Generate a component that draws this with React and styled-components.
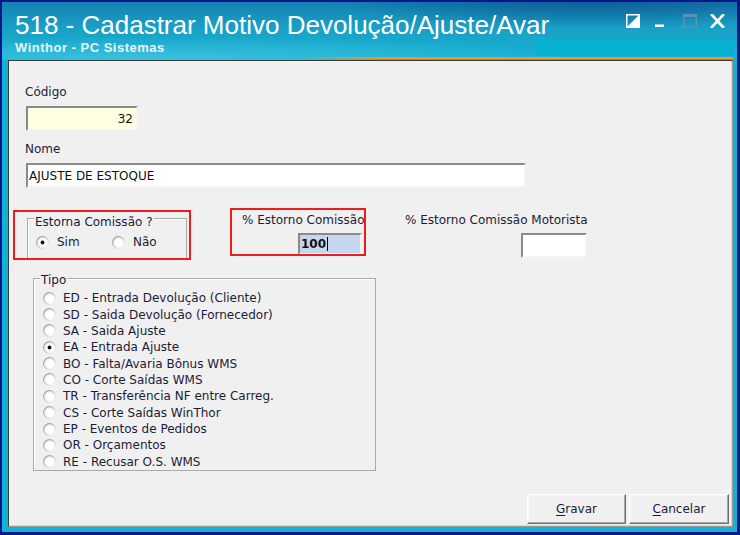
import React from "react";
import styled, { createGlobalStyle } from "styled-components";

const GlobalStyle = createGlobalStyle`
  html, body {
    margin: 0;
    padding: 0;
    background: #0b168a;
  }
  body {
    font-family: "DejaVu Sans", "Liberation Sans", sans-serif;
  }
`;

const tipos = [
  { code: "ED", text: "ED - Entrada Devolução (Cliente)" },
  { code: "SD", text: "SD - Saida Devolução (Fornecedor)" },
  { code: "SA", text: "SA - Saida Ajuste" },
  { code: "EA", text: "EA - Entrada Ajuste" },
  { code: "BO", text: "BO - Falta/Avaria Bônus WMS" },
  { code: "CO", text: "CO - Corte Saídas WMS" },
  { code: "TR", text: "TR - Transferência NF entre Carreg." },
  { code: "CS", text: "CS - Corte Saídas WinThor" },
  { code: "EP", text: "EP - Eventos de Pedidos" },
  { code: "OR", text: "OR - Orçamentos" },
  { code: "RE", text: "RE - Recusar O.S. WMS" },
];

// classic 3D radio bullet
const RadioMark = ({ checked }) => (
  <RadioSvg width="13" height="13" viewBox="0 0 13 13">
    <defs>
      <linearGradient id="rdOuter" x1="0" y1="0" x2="1" y2="1">
        <stop offset="0" stopColor="#8c8c8c" />
        <stop offset="0.55" stopColor="#c8c8c8" />
        <stop offset="1" stopColor="#ffffff" />
      </linearGradient>
      <linearGradient id="rdInner" x1="0" y1="0" x2="1" y2="1">
        <stop offset="0" stopColor="#c4c4c4" />
        <stop offset="0.6" stopColor="#eeeeee" />
        <stop offset="1" stopColor="#ffffff" />
      </linearGradient>
    </defs>
    <circle cx="6.5" cy="6.5" r="5.9" fill="#ffffff" stroke="url(#rdOuter)" strokeWidth="1.1" />
    <circle cx="6.5" cy="6.5" r="4.8" fill="none" stroke="url(#rdInner)" strokeWidth="1" />
    {checked && <circle cx="6.5" cy="6.5" r="1.9" fill="#111" />}
  </RadioSvg>
);

const App = () => {
  return (
    <>
      <GlobalStyle />
      <Window>
        <TitleBar>
          <TopRow>
            <Title>518 - Cadastrar Motivo Devolução/Ajuste/Avar</Title>
            <Controls>
              <ControlIcon width="14" height="14" viewBox="0 0 14 14">
                <rect x="0.75" y="0.75" width="12.5" height="12.5" fill="none" stroke="#fff" strokeWidth="1.5" />
                <polygon points="1,13 13,1 13,13" fill="#fff" />
              </ControlIcon>
              <ControlIcon $gap={15} width="9" height="14" viewBox="0 0 9 14">
                <rect x="0" y="10.5" width="9" height="2.5" fill="#fff" />
              </ControlIcon>
              <ControlIcon $gap={19} width="14" height="14" viewBox="0 0 14 14">
                <rect x="0.75" y="0.75" width="12.5" height="12.5" fill="none" stroke="#5f8fb0" strokeWidth="1.5" />
                <rect x="0" y="0" width="14" height="3" fill="#5f8fb0" />
              </ControlIcon>
              <ControlIcon $gap={13} width="15" height="14" viewBox="0 0 15 14">
                <path d="M2 1 L13 13 M13 1 L2 13" stroke="#fff" strokeWidth="2.6" strokeLinecap="square" />
              </ControlIcon>
            </Controls>
          </TopRow>
          <SubRow>
            <Subtitle>Winthor - PC Sistemas</Subtitle>
            <AccentBlock />
          </SubRow>
        </TitleBar>

        <Body>
          <Label $top={24} $left={16}>Código</Label>
          <Edit $top={7} $left={17} $width={112} $bg="#ffffe1" $align="right">
            32
          </Edit>
          <Label $top={11} $left={16}>Nome</Label>
          <Edit $top={7} $left={17} $width={500}>
            AJUSTE DE ESTOQUE
          </Edit>

          <FieldsRow>
            <Highlight $top={2} $width={178} $height={50}>
              <GroupBox $top={6} $left={12} $width={160} $height={42}>
                <Caption $top={-4}>Estorna Comissão ?</Caption>
                <RadioLine>
                  <RadioOption $width={76}>
                    <RadioMark checked />
                    Sim
                  </RadioOption>
                  <RadioOption>
                    <RadioMark />
                    Não
                  </RadioOption>
                </RadioLine>
              </GroupBox>
            </Highlight>

            <Highlight $left={39} $width={136} $height={48}>
              <Label $top={3} $left={10}>% Estorno Comissão</Label>
              <Edit $top={6} $left={66} $width={64} $height={22} $bg="#c7d6ef" $bold>
                100
                <Caret />
              </Edit>
            </Highlight>

            <FieldColumn $left={39}>
              <Label $top={5}>% Estorno Comissão Motorista</Label>
              <Edit $top={6} $left={116} $width={66} />
            </FieldColumn>
          </FieldsRow>

          <GroupBox $top={18} $left={24} $width={343} $height={193}>
            <Caption $top={-6}>Tipo</Caption>
            <TipoList>
              {tipos.map((t) => (
                <TipoItem key={t.code}>
                  <RadioMark checked={t.code === "EA"} />
                  {t.text}
                </TipoItem>
              ))}
            </TipoList>
          </GroupBox>

          <Footer>
            <Button $width={99}>
              <u>G</u>ravar
            </Button>
            <Button $width={100}>
              <u>C</u>ancelar
            </Button>
          </Footer>
        </Body>
      </Window>
    </>
  );
};

const Window = styled.div`
  width: 740px;
  height: 535px;
  box-sizing: border-box;
  border-style: solid;
  border-color: #0b168a;
  border-width: 2px 3px 3px 2px;
  background: #12b2d3;
  display: flex;
  flex-direction: column;
  overflow: hidden;
`;

const TitleBar = styled.div`
  position: relative;
  height: 58px;
  flex-shrink: 0;
  display: flex;
  flex-direction: column;
  padding-left: 13px;
  background:
    radial-gradient(ellipse 55% 95% at 80% -20%, rgba(5, 45, 115, 0.6), transparent 70%),
    radial-gradient(ellipse 90% 55% at 20% 95%, rgba(140, 225, 245, 0.3), transparent 65%),
    linear-gradient(180deg, #1482b3 0%, #19a0c6 45%, #15b3d4 100%);

  &::after {
    content: "";
    position: absolute;
    left: 300px;
    right: 4px;
    bottom: 1px;
    height: 2px;
    background: linear-gradient(90deg, rgba(232, 156, 44, 0), #e89c2c 18%, #e89c2c);
  }
`;

const TopRow = styled.div`
  display: flex;
  align-items: flex-start;
  padding-top: 8px;
`;

const Title = styled.div`
  font-family: "Liberation Sans", Arial, sans-serif;
  font-size: 26px;
  line-height: 30px;
  color: #ffffff;
  white-space: nowrap;
`;

const Controls = styled.div`
  margin-left: auto;
  margin-right: 12px;
  margin-top: 4px;
  display: flex;
  align-items: flex-start;
`;

const ControlIcon = styled.svg`
  display: block;
  margin-left: ${(p) => p.$gap || 0}px;
`;

const SubRow = styled.div`
  display: flex;
  align-items: flex-start;
`;

const Subtitle = styled.div`
  font-family: "Liberation Sans", Arial, sans-serif;
  font-weight: bold;
  font-size: 13px;
  line-height: 15px;
  letter-spacing: 0.5px;
  color: #e8f6fb;
  white-space: nowrap;
`;

const AccentBlock = styled.div`
  margin-left: auto;
  margin-right: 4px;
  width: 197px;
  height: 16px;
  background: #05b0d0;
`;

const Body = styled.div`
  flex: 1;
  margin: 0 4px 5px 6px;
  box-sizing: border-box;
  border: 1px solid;
  border-color: #3a3a3a #9a9a9a #9a9a9a #3a3a3a;
  box-shadow: inset -1px -1px 0 #d8d8d8;
  background: #f0f0f0;
  display: flex;
  flex-direction: column;
  align-items: flex-start;
  font-size: 12px;
  color: #1c1c38;
`;

const Label = styled.div`
  margin-top: ${(p) => p.$top || 0}px;
  margin-left: ${(p) => p.$left || 0}px;
  line-height: 14px;
  white-space: nowrap;
`;

const Edit = styled.div`
  margin-top: ${(p) => p.$top || 0}px;
  margin-left: ${(p) => p.$left || 0}px;
  width: ${(p) => p.$width}px;
  height: ${(p) => p.$height || 25}px;
  flex-shrink: 0;
  box-sizing: border-box;
  border: 2px solid;
  border-color: #8a8a8a #f4f4f4 #f4f4f4 #8a8a8a;
  background: ${(p) => p.$bg || "#ffffff"};
  display: flex;
  align-items: center;
  justify-content: ${(p) => (p.$align === "right" ? "flex-end" : "flex-start")};
  padding: 0 3px 0 1px;
  font-weight: ${(p) => (p.$bold ? "bold" : "normal")};
  color: #101010;
  white-space: nowrap;
`;

const Caret = styled.span`
  display: inline-block;
  width: 1px;
  height: 14px;
  margin-left: 1px;
  background: #000;
`;

const FieldsRow = styled.div`
  margin-top: 20px;
  margin-left: 4px;
  display: flex;
  align-items: flex-start;
`;

const Highlight = styled.div`
  margin-top: ${(p) => p.$top || 0}px;
  margin-left: ${(p) => p.$left || 0}px;
  width: ${(p) => p.$width}px;
  height: ${(p) => p.$height}px;
  box-sizing: border-box;
  border: 2px solid #ee1c1c;
  display: flex;
  flex-direction: column;
  align-items: flex-start;
  overflow: hidden;
`;

const FieldColumn = styled.div`
  margin-left: ${(p) => p.$left || 0}px;
  display: flex;
  flex-direction: column;
  align-items: flex-start;
`;

const GroupBox = styled.div`
  position: relative;
  margin-top: ${(p) => p.$top || 0}px;
  margin-left: ${(p) => p.$left || 0}px;
  width: ${(p) => p.$width}px;
  height: ${(p) => p.$height}px;
  flex-shrink: 0;
  box-sizing: border-box;
  border: 1px solid #a9a9a9;
  box-shadow: inset 1px 1px 0 #ffffff;
`;

const Caption = styled.span`
  position: absolute;
  top: ${(p) => p.$top}px;
  left: 6px;
  padding: 0 1px;
  line-height: 14px;
  background: #f0f0f0;
  white-space: nowrap;
`;

const RadioLine = styled.div`
  display: flex;
  padding: 16px 0 0 8px;
`;

const RadioOption = styled.label`
  display: flex;
  align-items: center;
  gap: 8px;
  width: ${(p) => (p.$width ? `${p.$width}px` : "auto")};
  line-height: 14px;
  white-space: nowrap;
`;

const RadioSvg = styled.svg`
  display: block;
  flex-shrink: 0;
`;

const TipoList = styled.div`
  display: flex;
  flex-direction: column;
  padding: 11px 0 0 9px;
`;

const TipoItem = styled.label`
  display: flex;
  align-items: center;
  gap: 7px;
  height: 16.37px;
  white-space: nowrap;
`;

const Footer = styled.div`
  margin-top: auto;
  align-self: flex-end;
  margin-right: 3px;
  margin-bottom: 2px;
  display: flex;
  gap: 3px;
`;

const Button = styled.button`
  width: ${(p) => p.$width}px;
  height: 30px;
  box-sizing: border-box;
  border: 1px solid;
  border-color: #ffffff #6e6e6e #6e6e6e #ffffff;
  box-shadow: inset -1px -1px 0 #a8a8a8, inset 1px 1px 0 #f8f8f8;
  background: #f0f0f0;
  font-family: "DejaVu Sans", "Liberation Sans", sans-serif;
  font-size: 12px;
  color: #1c1c38;
  padding: 0;
  cursor: pointer;

  u {
    text-decoration-thickness: 1px;
    text-underline-offset: 2px;
  }
`;

export default App;
